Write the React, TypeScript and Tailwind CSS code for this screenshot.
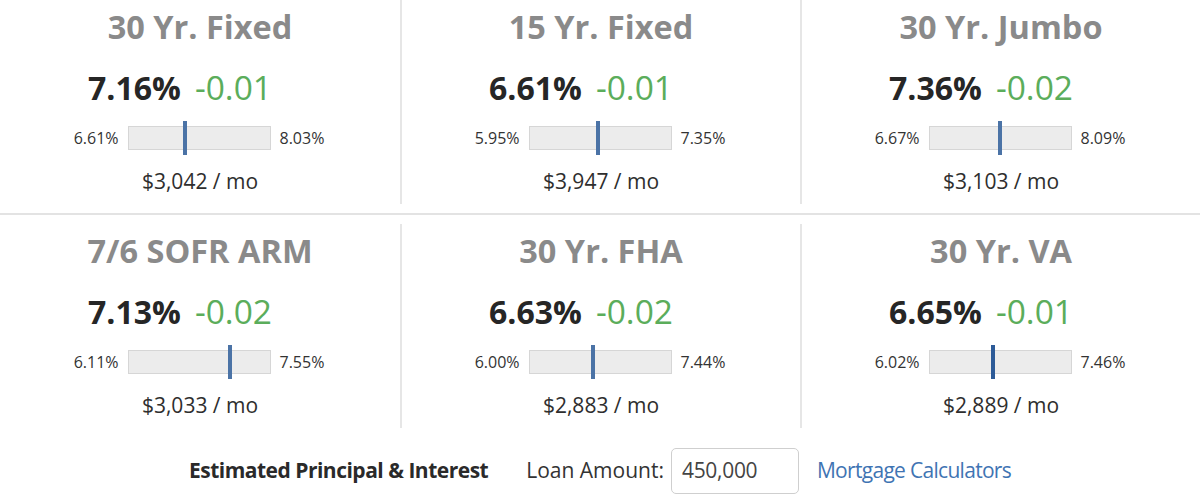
import React from "react";

type Rate = { name: string; rate: string; change: string; min: string; max: string; mo: string; dark?: boolean };

const rows: Rate[][] = [
  [
    { name: "30 Yr. Fixed", rate: "7.16%", change: "-0.01", min: "6.61%", max: "8.03%", mo: "$3,042 / mo" },
    { name: "15 Yr. Fixed", rate: "6.61%", change: "-0.01", min: "5.95%", max: "7.35%", mo: "$3,947 / mo" },
    { name: "30 Yr. Jumbo", rate: "7.36%", change: "-0.02", min: "6.67%", max: "8.09%", mo: "$3,103 / mo" },
  ],
  [
    { name: "7/6 SOFR ARM", rate: "7.13%", change: "-0.02", min: "6.11%", max: "7.55%", mo: "$3,033 / mo" },
    { name: "30 Yr. FHA", rate: "6.63%", change: "-0.02", min: "6.00%", max: "7.44%", mo: "$2,883 / mo" },
    { name: "30 Yr. VA", rate: "6.65%", change: "-0.01", min: "6.02%", max: "7.46%", mo: "$2,889 / mo", dark: true },
  ],
];

function Cell({ r, first }: { r: Rate; first: boolean }) {
  const v = parseFloat(r.rate);
  const lo = parseFloat(r.min);
  const hi = parseFloat(r.max);
  const frac = (v - lo) / (hi - lo);
  return (
    <div className={`flex flex-col items-center h-[204px] ${first ? "" : "border-l-2 border-[#e6e6e6]"}`}>
      <div className="mt-[6px] text-[32.5px] leading-[42px] font-bold text-[#8a8a8a]">{r.name}</div>
      <div className="mt-[17px] flex items-baseline gap-[14px] pr-[40px] leading-[44px]">
        <span className="text-[32px] font-bold text-[#262626]">{r.rate}</span>
        <span className="text-[33.5px] text-[#5bad5b]">{r.change}</span>
      </div>
      <div className="mt-[16px] flex items-center gap-[9px]">
        <span className="w-[46px] text-right text-[16px] text-[#333]">{r.min}</span>
        <div className="relative h-[24px] w-[143px] bg-[#ececec] border border-[#d6d6d6]">
          <div
            className={`absolute top-[-6px] h-[34px] w-[4px] ${r.dark ? "bg-[#2d5b98]" : "bg-[#4b73a6]"}`}
            style={{ left: `${frac * 141}px` }}
          />
        </div>
        <span className="w-[48px] text-left text-[16px] text-[#333]">{r.max}</span>
      </div>
      <div className="mt-[17px] text-[21px] leading-[28px] text-[#2e2e2e]">{r.mo}</div>
    </div>
  );
}

export default function App() {
  return (
    <div className="w-[1200px] h-[504px] bg-white overflow-hidden" style={{ fontFamily: "'Open Sans', Lato, sans-serif" }}>
      <div className="grid grid-cols-3">
        {rows[0].map((r, i) => (
          <Cell key={r.name} r={r} first={i === 0} />
        ))}
      </div>
      <div className="my-[9px] h-[2px] bg-[#e3e3e3]" />
      <div className="grid grid-cols-3">
        {rows[1].map((r, i) => (
          <Cell key={r.name} r={r} first={i === 0} />
        ))}
      </div>
      <div className="mt-[20px] flex items-center justify-center">
        <span className="text-[21px] font-bold text-[#2a2a2a] tracking-[-0.5px]">Estimated Principal &amp; Interest</span>
        <span className="ml-[38px] text-[21px] text-[#333]">Loan Amount:</span>
        <div className="ml-[7px] flex h-[46px] w-[128px] items-center rounded-[5px] border border-[#cfcfcf] px-[10px] text-[21px] text-[#444] tracking-[-0.3px]">
          450,000
        </div>
        <span className="ml-[18px] text-[21px] text-[#3f74b3] tracking-[-0.7px]">Mortgage Calculators</span>
      </div>
    </div>
  );
}
